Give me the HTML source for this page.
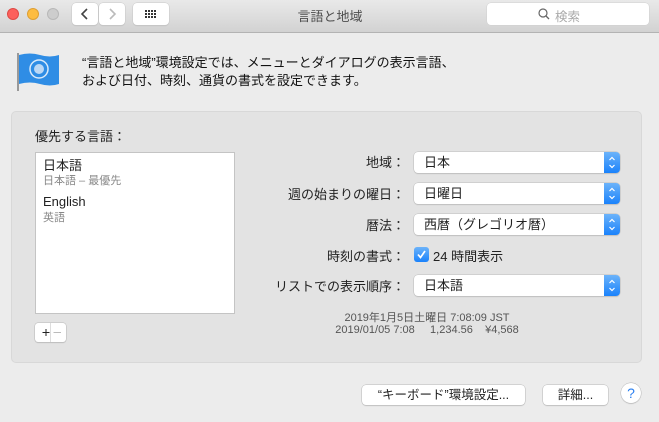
<!DOCTYPE html>
<html><head><meta charset="utf-8"><style>
*{box-sizing:border-box;margin:0;padding:0}
body{width:659px;height:422px;overflow:hidden;background:#ececec;font-family:"Liberation Sans","Noto Sans CJK JP",sans-serif;font-size:13px;color:#222;position:relative}
.a{position:absolute}
.tb{left:0;top:0;width:659px;height:33px;background:linear-gradient(#e9e9e9,#d2d2d2);border-bottom:1px solid #b3b3b3}
.dot{width:12px;height:12px;border-radius:50%;top:8px}
.btn{background:#fff;border-radius:4px;box-shadow:0 0 0 .5px #c8c8c8,0 1px 1px rgba(0,0,0,.12)}
.panel{left:11px;top:111px;width:631px;height:252px;background:#e3e3e3;border:1px solid #d8d8d8;border-radius:5px}
.lab{right:254px;width:200px;text-align:right;font-size:13px}
.pop{left:414px;width:206px;height:21px;background:#fff;border-radius:4px;box-shadow:0 0 0 .5px #bcbcbc,0 1px 1px rgba(0,0,0,.15);padding-left:10px;line-height:21px}
.pop .ar{position:absolute;right:0;top:0;width:16px;height:21px;background:linear-gradient(#6cb3fa,#1a82fb);border-radius:0 4px 4px 0}
.pb{height:20px;background:#fff;border-radius:4px;box-shadow:0 0 0 .5px #b8b8b8,0 1px 1px rgba(0,0,0,.15);text-align:center;line-height:20px;font-size:12.5px}
</style></head><body>
<div class="a tb"></div>
<div class="a dot" style="left:7px;background:#fc605c;border:.5px solid #de4a45"></div>
<div class="a dot" style="left:27px;background:#fdbc40;border:.5px solid #de9f34"></div>
<div class="a dot" style="left:47px;background:#cdcdcd;border:.5px solid #b8b8b8"></div>
<div class="a btn" style="left:72px;top:3px;width:26px;height:22px"><svg width="26" height="22"><path d="M15 6 L10 11 L15 16" stroke="#444" stroke-width="1.6" fill="none"/></svg></div>
<div class="a btn" style="left:99px;top:3px;width:26px;height:22px"><svg width="26" height="22"><path d="M11 6 L16 11 L11 16" stroke="#bbb" stroke-width="1.6" fill="none"/></svg></div>
<div class="a btn" style="left:133px;top:3px;width:36px;height:22px"><svg width="36" height="22"><g fill="#333"><rect x="12" y="7" width="2" height="2"/><rect x="15" y="7" width="2" height="2"/><rect x="18" y="7" width="2" height="2"/><rect x="21" y="7" width="2" height="2"/><rect x="12" y="10" width="2" height="2"/><rect x="15" y="10" width="2" height="2"/><rect x="18" y="10" width="2" height="2"/><rect x="21" y="10" width="2" height="2"/><rect x="12" y="13" width="2" height="2"/><rect x="15" y="13" width="2" height="2"/><rect x="18" y="13" width="2" height="2"/><rect x="21" y="13" width="2" height="2"/></g></svg></div>
<div class="a" style="left:280px;top:6px;width:100px;text-align:center;color:#4d4d4d;font-size:13px">言語と地域</div>
<div class="a" style="left:487px;top:3px;width:162px;height:22px;background:#fff;border-radius:4px;box-shadow:0 0 0 .5px #d0d0d0"><svg class="a" style="left:51px;top:5px" width="12" height="12"><circle cx="5" cy="5" r="4" stroke="#666" stroke-width="1.2" fill="none"/><path d="M8 8 L11 11" stroke="#666" stroke-width="1.3"/></svg><span class="a" style="left:68px;top:3px;color:#aaa;font-size:12.5px">検索</span></div>
<svg class="a" style="left:16px;top:50px" width="46" height="42"><rect x="1" y="3" width="2" height="38" fill="#999"/><path d="M3 5 Q14 2 24 5 Q34 8 43 5 L43 34 Q34 37 24 34 Q14 31 3 34Z" fill="#2f8de5"/><circle cx="23" cy="19" r="9" fill="none" stroke="#d8e9fa" stroke-width="1.5"/><circle cx="23" cy="19" r="5" fill="#bcd8f5"/></svg>
<div class="a" style="left:82px;top:54px;line-height:18px;font-size:13px;color:#111">“言語と地域”環境設定では、メニューとダイアログの表示言語、<br>および日付、時刻、通貨の書式を設定できます。</div>
<div class="a panel"></div>
<div class="a" style="left:35px;top:126px">優先する言語：</div>
<div class="a" style="left:35px;top:152px;width:200px;height:162px;background:#fff;border:1px solid #c4c4c4"></div>
<div class="a" style="left:43px;top:155px;font-size:13px">日本語</div>
<div class="a" style="left:43px;top:172px;font-size:11px;color:#888">日本語 – 最優先</div>
<div class="a" style="left:43px;top:194px;font-size:13px">English</div>
<div class="a" style="left:43px;top:209px;font-size:11px;color:#888">英語</div>
<div class="a" style="left:35px;top:323px;width:31px;height:19px;background:#fff;border-radius:3px;box-shadow:0 0 0 .5px #b8b8b8,0 1px 1px rgba(0,0,0,.15)"><div class="a" style="left:15px;top:0;width:1px;height:19px;background:#ddd"></div><svg class="a" style="left:0;top:0" width="31" height="19"><path d="M7.5 9.5H14.5M11 6V13" stroke="#222" stroke-width="1"/><path d="M18.5 9.5H26" stroke="#bbb" stroke-width="1"/></svg></div>
<div class="a lab" style="top:152px">地域：</div>
<div class="a lab" style="top:184px">週の始まりの曜日：</div>
<div class="a lab" style="top:215px">暦法：</div>
<div class="a lab" style="top:246px">時刻の書式：</div>
<div class="a lab" style="top:276px">リストでの表示順序：</div>
<div class="a pop" style="top:152px">日本<div class="ar"><svg width="16" height="21"><path d="M5.5 8 L8 5.5 L10.5 8M5.5 13 L8 15.5 L10.5 13" stroke="#fff" stroke-width="1.2" fill="none"/></svg></div></div>
<div class="a pop" style="top:183px">日曜日<div class="ar"><svg width="16" height="21"><path d="M5.5 8 L8 5.5 L10.5 8M5.5 13 L8 15.5 L10.5 13" stroke="#fff" stroke-width="1.2" fill="none"/></svg></div></div>
<div class="a pop" style="top:214px">西暦（グレゴリオ暦）<div class="ar"><svg width="16" height="21"><path d="M5.5 8 L8 5.5 L10.5 8M5.5 13 L8 15.5 L10.5 13" stroke="#fff" stroke-width="1.2" fill="none"/></svg></div></div>
<div class="a" style="left:414px;top:247px;width:15px;height:15px;border-radius:3px;background:linear-gradient(#6cb3fa,#1a82fb)"><svg width="15" height="15"><path d="M4 7.5 L6.5 10.5 L11 4" stroke="#fff" stroke-width="1.7" fill="none"/></svg></div>
<div class="a" style="left:433px;top:246px">24 時間表示</div>
<div class="a pop" style="top:275px">日本語<div class="ar"><svg width="16" height="21"><path d="M5.5 8 L8 5.5 L10.5 8M5.5 13 L8 15.5 L10.5 13" stroke="#fff" stroke-width="1.2" fill="none"/></svg></div></div>
<div class="a" style="left:300px;top:309px;width:254px;text-align:center;font-size:11px;color:#555">2019年1月5日土曜日 7:08:09 JST</div>
<div class="a" style="left:300px;top:324px;width:254px;text-align:center;font-size:11px;color:#555">2019/01/05 7:08 &nbsp;&nbsp;&nbsp; 1,234.56 &nbsp;&nbsp; ¥4,568</div>
<div class="a pb" style="left:362px;top:385px;width:163px">“キーボード”環境設定...</div>
<div class="a pb" style="left:543px;top:385px;width:65px">詳細...</div>
<div class="a" style="left:621px;top:383px;width:20px;height:20px;border-radius:50%;background:#fff;box-shadow:0 0 0 .5px #b8b8b8,0 1px 1px rgba(0,0,0,.15);color:#2a7ff0;text-align:center;line-height:20px;font-size:14px">?</div>
</body></html>
